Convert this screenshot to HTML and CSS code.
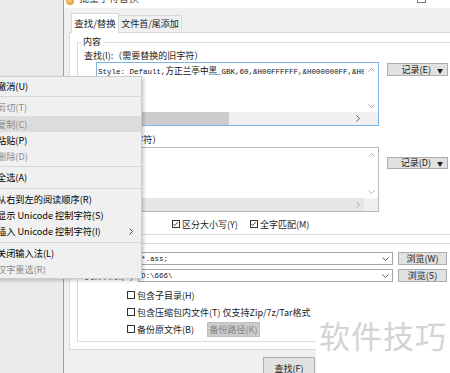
FILE: index.html
```html
<!doctype html>
<html>
<head>
    <meta charset="utf-8">
    <title>批量字符替换</title>
    <link rel="stylesheet" href="styles.css">
</head>
<body>
    <div class="desktop">
        <div class="dialog">
            <div class="titlebar">
                <span class="app-icon"></span>
                <span class="title">批量字符替换</span>
                <span class="max-btn"></span>
            </div>
            <div class="tabbar">
                <div class="tab active">查找/替换</div>
                <div class="tab">文件首/尾添加</div>
            </div>
            <div class="panel">
                <fieldset class="group">
                    <legend>内容</legend>
                    <div class="field-label">查找(I):（需要替换的旧字符）</div>
                    <div class="edit-row">
                        <div class="memo focused">
                            <div class="memo-text">Style: Default,<span class="cjk">方正兰亭中黑</span>_GBK,60,&amp;H00FFFFFF,&amp;H000000FF,&amp;H0C</div>
                            <div class="vscroll">
                                <svg width="7" height="4" viewBox="0 0 7 4"><polyline points="0.5,3.5 3.5,0.5 6.5,3.5" fill="none" stroke="#a6a6a6"/></svg>
                                <svg width="7" height="4" viewBox="0 0 7 4"><polyline points="0.5,0.5 3.5,3.5 6.5,0.5" fill="none" stroke="#a6a6a6"/></svg>
                            </div>
                            <div class="hscroll">
                                <div class="arrow"></div>
                                <div class="track"><div class="thumb"></div></div>
                                <div class="arrow">
                                    <svg width="4" height="7" viewBox="0 0 4 7"><polyline points="0.5,0.5 3.5,3.5 0.5,6.5" fill="none" stroke="#606060"/></svg>
                                </div>
                            </div>
                            <div class="corner"></div>
                        </div>
                        <button class="btn record">记录(E) <span class="caret">▼</span></button>
                    </div>

                    <div class="field-label second">替换(R):（新字符）</div>
                    <div class="edit-row tight">
                        <div class="memo tall">
                            <div class="memo-text"></div>
                            <div class="vscroll">
                                <svg width="7" height="4" viewBox="0 0 7 4"><polyline points="0.5,3.5 3.5,0.5 6.5,3.5" fill="none" stroke="#b4b4b4"/></svg>
                                <svg width="7" height="4" viewBox="0 0 7 4"><polyline points="0.5,0.5 3.5,3.5 6.5,0.5" fill="none" stroke="#b4b4b4"/></svg>
                            </div>
                            <div class="hscroll empty">
                                <div class="arrow"></div>
                                <div class="track"></div>
                                <div class="arrow">
                                    <svg width="4" height="7" viewBox="0 0 4 7"><polyline points="0.5,0.5 3.5,3.5 0.5,6.5" fill="none" stroke="#a6a6a6"/></svg>
                                </div>
                            </div>
                            <div class="corner"></div>
                        </div>
                        <button class="btn record lower">记录(D) <span class="caret">▼</span></button>
                    </div>

                    <div class="check-row options">
                        <span class="box">
                            <svg width="8" height="8" viewBox="0 0 8 8"><polyline points="1.5,4 3.2,5.8 6.6,1.8" fill="none" stroke="#222" stroke-width="0.9"/></svg>
                        </span>
                        <span>区分大小写(Y)</span>
                        <span class="box spaced">
                            <svg width="8" height="8" viewBox="0 0 8 8"><polyline points="1.5,4 3.2,5.8 6.6,1.8" fill="none" stroke="#222" stroke-width="0.9"/></svg>
                        </span>
                        <span>全字匹配(M)</span>
                    </div>
                </fieldset>

                <div class="group files">
                    <div class="combo-row">
                        <span class="combo-label"></span>
                        <div class="combo">
                            <span class="combo-text">*.ass;</span>
                            <svg width="7" height="4" viewBox="0 0 7 4"><polyline points="0.5,0.5 3.5,3.5 6.5,0.5" fill="none" stroke="#606060"/></svg>
                        </div>
                        <button class="btn browse">浏览(W)</button>
                    </div>
                    <div class="combo-row next">
                        <span class="combo-label">文件目录(D):</span>
                        <div class="combo">
                            <span class="combo-text">D:\666\</span>
                            <svg width="7" height="4" viewBox="0 0 7 4"><polyline points="0.5,0.5 3.5,3.5 6.5,0.5" fill="none" stroke="#606060"/></svg>
                        </div>
                        <button class="btn browse">浏览(S)</button>
                    </div>
                    <div class="check-row sub first">
                        <span class="box"></span>
                        <span>包含子目录(H)</span>
                    </div>
                    <div class="check-row sub">
                        <span class="box"></span>
                        <span>包含压缩包内文件(T) 仅支持Zip/7z/Tar格式</span>
                    </div>
                    <div class="check-row sub">
                        <span class="box"></span>
                        <span>备份原文件(B)</span>
                        <button class="btn disabled">备份路径(K)</button>
                    </div>
                </div>
            </div>
            <div class="footer">
                <button class="btn find">查找(F)</button>
            </div>
        </div>
    </div>

    <div class="context-menu">
        <div class="item">撤消(U)</div>
        <div class="sep"></div>
        <div class="item off">剪切(T)</div>
        <div class="item off hover">复制(C)</div>
        <div class="item">粘贴(P)</div>
        <div class="item off">删除(D)</div>
        <div class="sep"></div>
        <div class="item">全选(A)</div>
        <div class="sep"></div>
        <div class="item">从右到左的阅读顺序(R)</div>
        <div class="item">显示 Unicode 控制字符(S)</div>
        <div class="item">插入 Unicode 控制字符(I)
            <svg class="submenu" width="4" height="7" viewBox="0 0 4 7"><polyline points="0.5,0.5 3.5,3.5 0.5,6.5" fill="none" stroke="#444"/></svg>
        </div>
        <div class="sep"></div>
        <div class="item">关闭输入法(L)</div>
        <div class="item off">汉字重选(R)</div>
    </div>

    <div class="watermark">软件技巧</div>
</body>
</html>
```

FILE: styles.css
```css
* {
    box-sizing: border-box;
}
html, body {
    margin: 0;
    padding: 0;
}
body {
    width: 450px;
    height: 373px;
    overflow: hidden;
    position: relative;
    background-color: #ebebeb;
    font-family: "Noto Sans CJK SC", "Noto Sans", sans-serif;
    font-size: 9px;
    color: #1a1a1a;
}
.desktop {
    display: flex;
    height: 373px;
}
.dialog {
    flex: none;
    width: 420px;
    height: 373px;
    margin-left: 63px;
    background-color: #f0f0f0;
    border-left: 1px solid #7fa6d6;
}

/* title bar, only the lower strip is on screen */
.titlebar {
    height: 8px;
    background-color: #fff;
    display: flex;
    align-items: flex-start;
    overflow: hidden;
}
.app-icon {
    width: 8px;
    height: 8px;
    margin: -3px 0 0 2px;
    border-radius: 50%;
    background: radial-gradient(circle at 40% 40%, #f7d27a, #d68a2a);
}
.title {
    margin: -8px 0 0 5px;
    font-size: 10px;
    line-height: 12px;
    color: #444;
}
.max-btn {
    width: 9px;
    height: 3px;
    margin: 0 57px 0 auto;
    border: 1px solid #777;
    border-top: none;
}

/* tabs */
.tabbar {
    height: 24px;
    display: flex;
    align-items: flex-end;
    padding-left: 7px;
}
.tab {
    height: 17px;
    width: 64px;
    margin-left: -1px;
    border: 1px solid #d9d9d9;
    border-bottom: none;
    line-height: 16px;
    text-align: center;
    background-color: #f0f0f0;
}
.tab.active {
    position: relative;
    z-index: 1;
    width: 48px;
    height: 20px;
    margin-left: 0;
    margin-bottom: -1px;
    line-height: 19px;
    font-size: 9.5px;
    background-color: #fff;
}
.panel {
    height: 318px;
    margin-left: 5px;
    border: 1px solid #d9d9d9;
    background-color: #fff;
}

/* group boxes */
.group {
    margin: 3px 6px 0 7px;
    padding: 2px 0 4px 0;
    border: 1px solid #dcdcdc;
    min-width: 0;
}
.group legend {
    margin-left: 3px;
    padding: 0 2px;
    line-height: 12px;
    font-size: 9px;
}
.group.files {
    margin-top: 8px;
    padding: 8px 0 6px 0;
}
.field-label {
    line-height: 12px;
    padding-left: 6px;
}
.field-label.second {
    margin-top: 8px;
}
.edit-row {
    display: flex;
    align-items: flex-start;
    padding-left: 18px;
}
.edit-row.tight {
    margin-top: 1px;
}

/* multi-line edits */
.memo {
    width: 283px;
    height: 64px;
    border: 1px solid #b8b8b8;
    background-color: #fff;
    display: grid;
    grid-template-columns: 1fr 14px;
    grid-template-rows: 1fr 13px;
}
.memo.focused {
    border-color: #7eb4ea;
}
.memo.tall {
    height: 65px;
}
.memo-text {
    padding: 2px 0 0 1px;
    overflow: hidden;
    white-space: nowrap;
    font-family: "Liberation Mono", "Noto Sans CJK SC", monospace;
    font-size: 7.5px;
    line-height: 10px;
    color: #111;
}
.memo-text .cjk {
    font-family: "Noto Sans CJK SC", sans-serif;
    font-size: 8.6px;
}
.vscroll {
    display: flex;
    flex-direction: column;
    align-items: center;
    justify-content: space-between;
    padding: 5px 0 4px 0;
    background-color: #fff;
}
.hscroll {
    display: flex;
    background-color: #f0f0f0;
}
.hscroll .arrow {
    width: 13px;
    display: flex;
    align-items: center;
    justify-content: center;
}
.hscroll .track {
    flex: 1;
    display: flex;
    align-items: stretch;
}
.hscroll .thumb {
    width: 119px;
    background-color: #cdcdcd;
}
.hscroll.empty {
    background-color: #e6e6e6;
}
.corner {
    background-color: #f0f0f0;
}

/* buttons */
.btn {
    font-family: inherit;
    font-size: 9px;
    color: #1a1a1a;
    padding: 0;
    background-color: #e1e1e1;
    border: 1px solid #adadad;
    border-radius: 0;
}
.record {
    width: 61px;
    height: 13px;
    margin: 1px 0 0 8px;
    line-height: 11px;
    text-align: right;
    padding-right: 4px;
}
.record.lower {
    margin-top: 10px;
    height: 12px;
    line-height: 10px;
}
.caret {
    font-size: 6px;
    margin-left: 4px;
}
.browse {
    width: 49px;
    height: 13px;
    margin-left: 5px;
    line-height: 11px;
}
.btn.disabled {
    width: 53px;
    height: 15px;
    margin-left: 13px;
    background-color: #cccccc;
    border-color: #bfbfbf;
    color: #838383;
}
.find {
    width: 52px;
    height: 22px;
}

/* check boxes */
.check-row {
    display: flex;
    align-items: center;
    height: 12px;
}
.check-row.options {
    margin-top: 6px;
    padding-left: 94px;
}
.check-row.sub {
    margin-top: 5px;
    padding-left: 49px;
}
.check-row.sub.first {
    margin-top: 7px;
}
.box {
    width: 8px;
    height: 8px;
    margin-right: 2px;
    border: 1px solid #333;
    background-color: #fff;
    display: flex;
}
.box svg {
    margin: -1px 0 0 -1px;
}
.box.spaced {
    margin-left: 12px;
}

/* combo boxes */
.combo-row {
    display: flex;
    align-items: center;
    height: 13px;
}
.combo-row.next {
    margin-top: 4px;
}
.combo-label {
    width: 60px;
    padding-left: 7px;
}
.combo {
    width: 255px;
    height: 13px;
    border: 1px solid #a7a7a7;
    background-color: #fff;
    display: flex;
    align-items: center;
    justify-content: space-between;
    padding: 0 3px 0 2px;
}
.combo-text {
    font-family: "Liberation Mono", monospace;
    font-size: 7.5px;
}

.footer {
    display: flex;
    padding: 7px 0 0 199px;
}

/* right-click menu over the dialog */
.context-menu {
    position: absolute;
    top: 76px;
    left: -20px;
    width: 162px;
    padding: 1px 0;
    background-color: #f0f0f0;
    border: 1px solid #cccccc;
    box-shadow: 2px 2px 3px rgba(0, 0, 0, 0.18);
    font-size: 9.2px;
    color: #000;
}
.context-menu .item {
    height: 16.3px;
    line-height: 16.3px;
    padding-left: 16px;
    display: flex;
    align-items: center;
    white-space: nowrap;
}
.context-menu .item.off {
    color: #8a8a8a;
}
.context-menu .item.hover {
    background-color: #dcdcdc;
}
.context-menu .submenu {
    margin: 0 8px 0 auto;
}
.context-menu .sep {
    height: 1px;
    margin: 2px 0;
    background-color: #d7d7d7;
}

.watermark {
    position: absolute;
    left: 316px;
    top: 290px;
    width: 134px;
    height: 83px;
    padding: 29px 0 0 3px;
    background-color: #fff;
    font-size: 31px;
    line-height: 31px;
    letter-spacing: 1px;
    color: #d3d3d3;
    white-space: nowrap;
}
```
